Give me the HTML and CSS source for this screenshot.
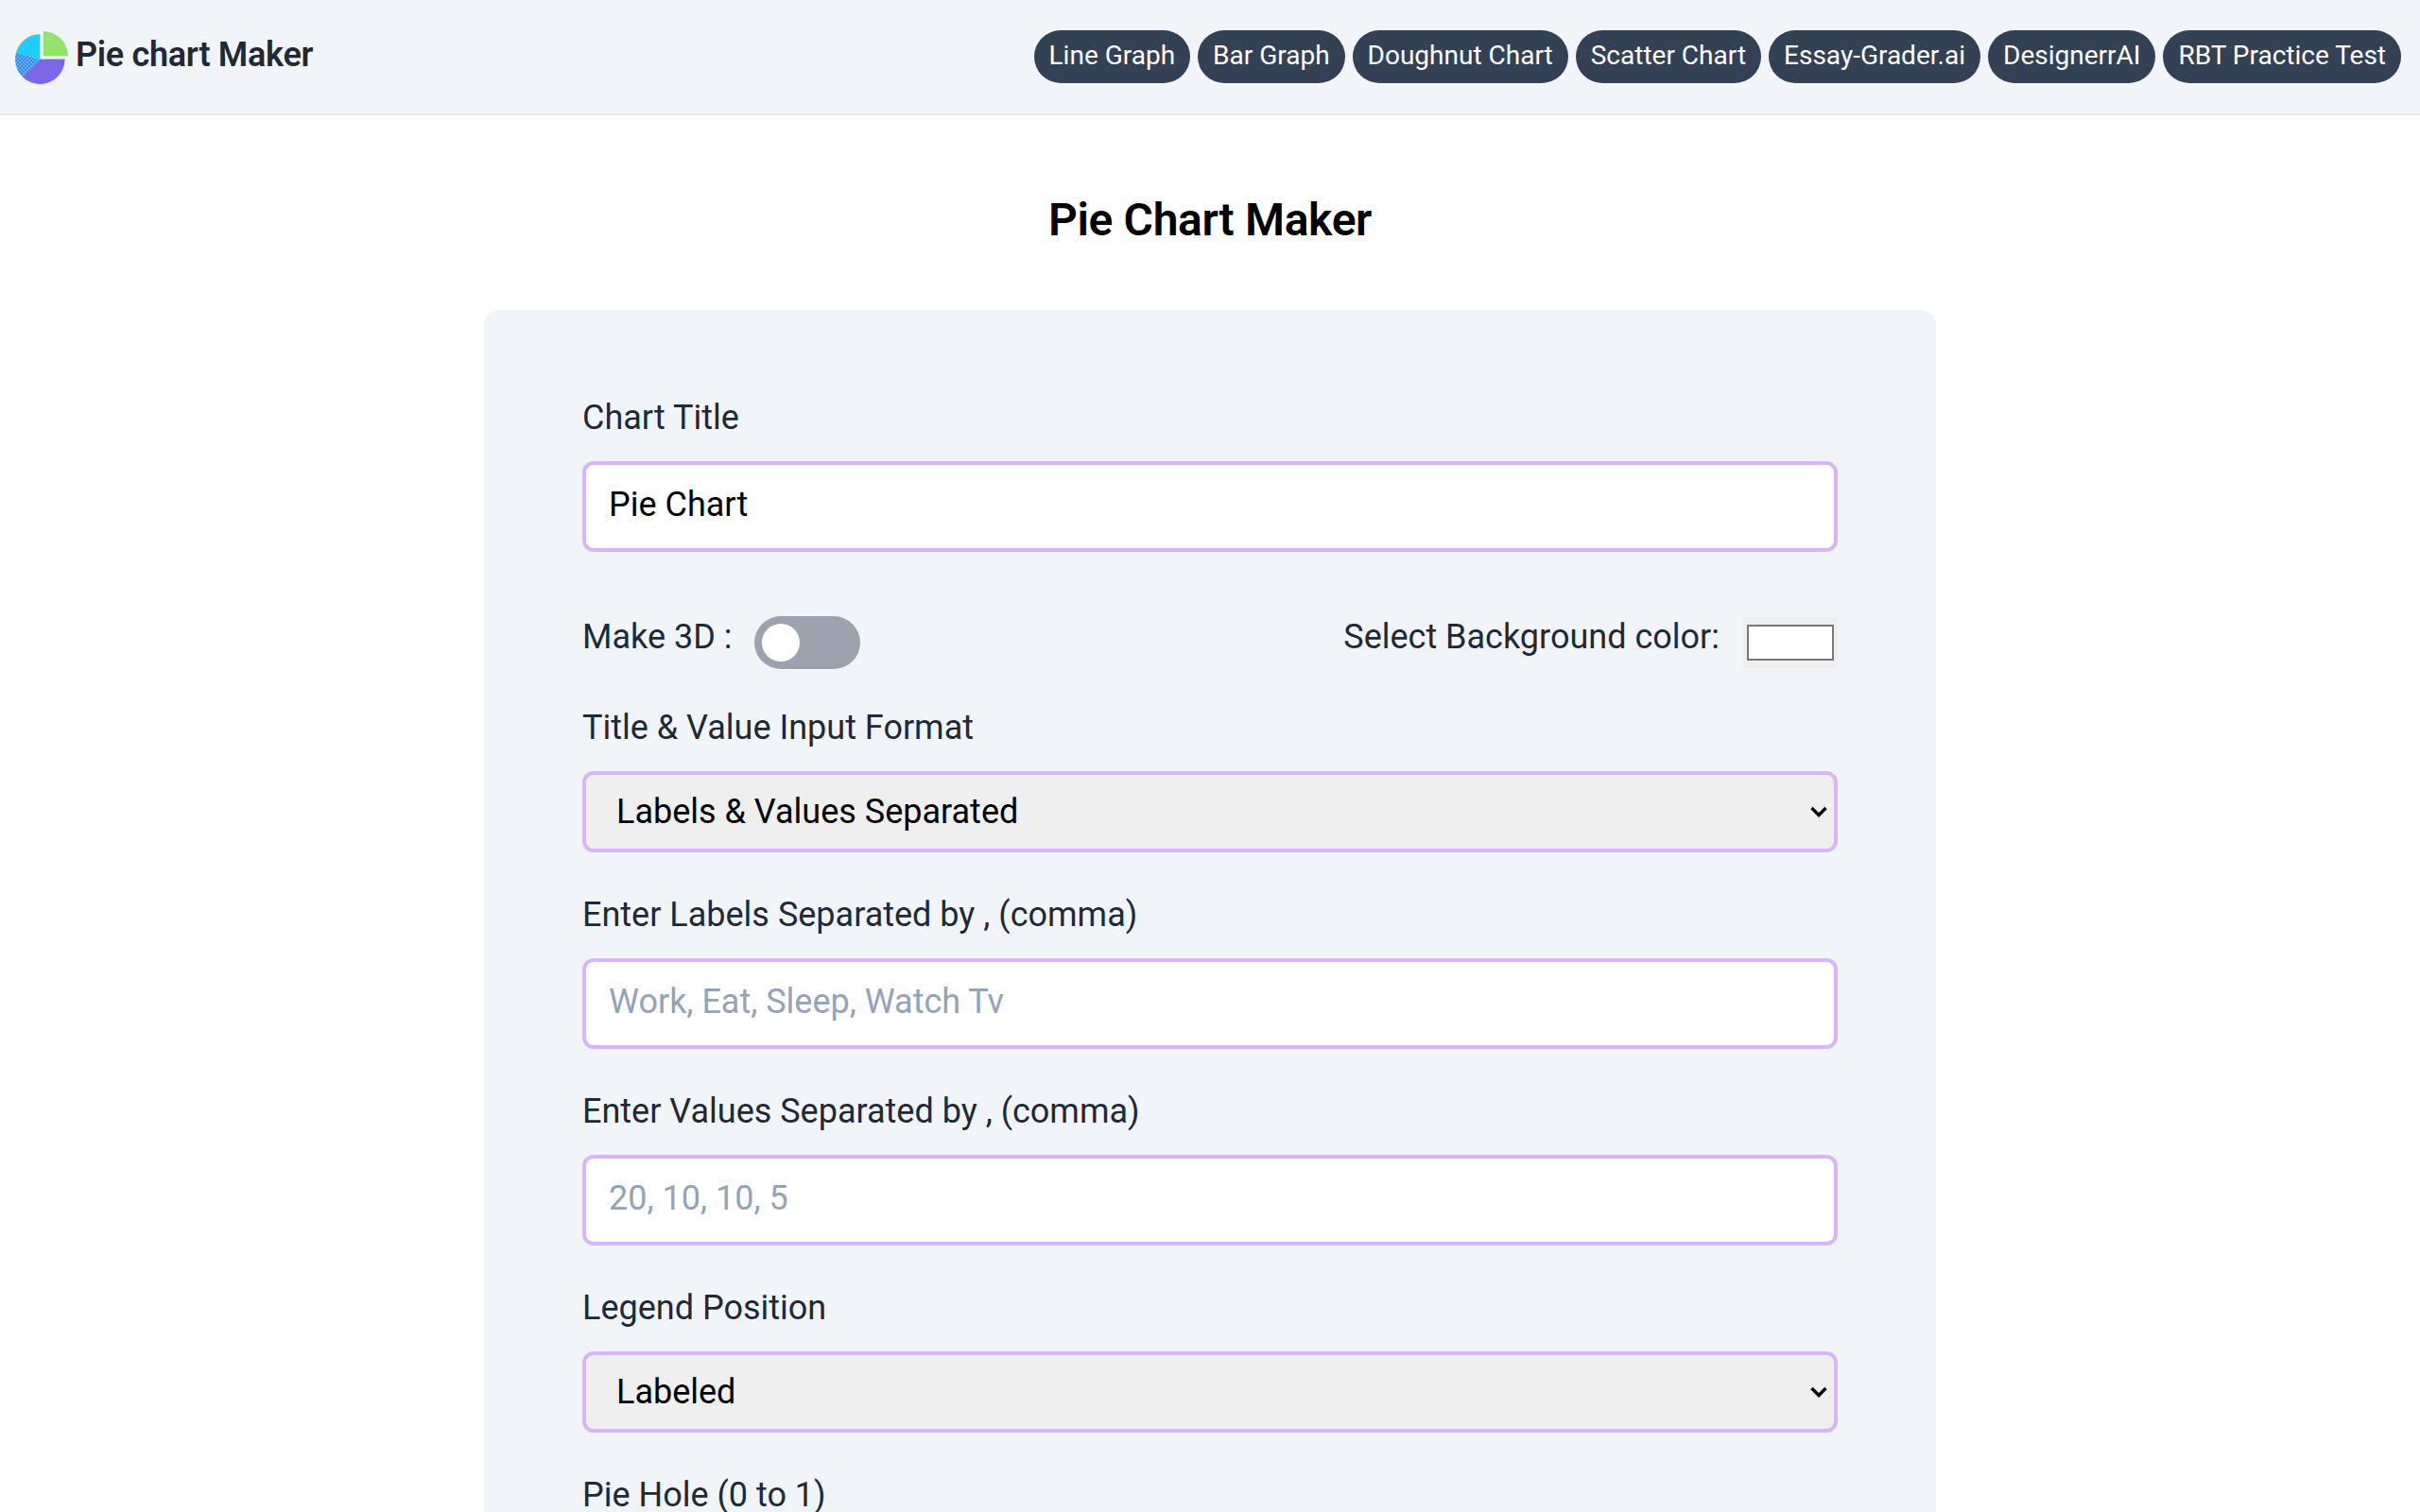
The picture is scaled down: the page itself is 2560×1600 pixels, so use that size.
FILE: index.html
```html
<!DOCTYPE html>
<html lang="en">
<head>
    <meta charset="UTF-8">
    <meta name="viewport" content="width=device-width, initial-scale=1.0">
    <title>Pie Chart Maker</title>
    <link rel="stylesheet" href="styles.css">
</head>
<body>
    <nav class="navbar">
        <a class="brand" href="#">
            <svg class="brand-logo" viewBox="0 0 56 56" aria-hidden="true">
                <defs>
                    <pattern id="dither" width="4" height="4" patternUnits="userSpaceOnUse">
                        <rect width="4" height="4" fill="#7c66ea"></rect>
                        <rect width="2" height="2" fill="#1ccfff"></rect>
                        <rect x="2" y="2" width="2" height="2" fill="#1ccfff"></rect>
                    </pattern>
                </defs>
                <path d="M26.3 29.5V3.2A26.3 26.3 0 0 0 1 22.6Z" fill="#1ccfff"></path>
                <path d="M26.3 29.5L1 22.6A26.3 26.3 0 0 0 7.5 48Z" fill="url(#dither)"></path>
                <path d="M26.3 29.5L7.5 48A26.3 26.3 0 0 0 52.6 29.5Z" fill="#7c66ea"></path>
                <path d="M29.7 26.3V0A26.3 26.3 0 0 1 56 26.3Z" fill="#94e36b"></path>
                <path d="M28 0V28H56" fill="none" stroke="#fff" stroke-width="2"></path>
            </svg>
            <span class="brand-name">Pie chart Maker</span>
        </a>
        <div class="nav-links">
            <a class="nav-pill" href="#">Line Graph</a>
            <a class="nav-pill" href="#">Bar Graph</a>
            <a class="nav-pill" href="#">Doughnut Chart</a>
            <a class="nav-pill" href="#">Scatter Chart</a>
            <a class="nav-pill" href="#">Essay-Grader.ai</a>
            <a class="nav-pill" href="#">DesignerrAI</a>
            <a class="nav-pill" href="#">RBT Practice Test</a>
        </div>
    </nav>

    <h1 class="page-title">Pie Chart Maker</h1>

    <form class="chart-form">
        <label class="field-label" for="chartTitle">Chart Title</label>
        <input class="text-input" id="chartTitle" type="text" value="Pie Chart">

        <div class="options-row">
            <div class="option">
                <span class="option-label">Make 3D :</span>
                <span class="toggle"><span class="toggle-knob"></span></span>
            </div>
            <div class="option">
                <label class="option-label" for="bgColor">Select Background color:</label>
                <input class="color-input" id="bgColor" type="color" value="#ffffff">
            </div>
        </div>

        <label class="field-label" for="inputFormat">Title &amp; Value Input Format</label>
        <select class="select-input" id="inputFormat">
            <option>Labels &amp; Values Separated</option>
        </select>

        <label class="field-label" for="labels">Enter Labels Separated by , (comma)</label>
        <input class="text-input" id="labels" type="text" placeholder="Work, Eat, Sleep, Watch Tv">

        <label class="field-label" for="values">Enter Values Separated by , (comma)</label>
        <input class="text-input" id="values" type="text" placeholder="20, 10, 10, 5">

        <label class="field-label" for="legend">Legend Position</label>
        <select class="select-input" id="legend">
            <option>Labeled</option>
        </select>

        <label class="field-label" for="pieHole">Pie Hole (0 to 1)</label>
    </form>
</body>
</html>
```

FILE: styles.css
```css
html {
    zoom: 2;
    height: 800px;
    overflow: hidden;
}

body {
    margin: 0;
    background: #fff;
    font-family: "Roboto", "Liberation Sans", sans-serif;
    color: #1f2937;
}

a {
    color: inherit;
    text-decoration: none;
}

.navbar {
    display: flex;
    justify-content: space-between;
    align-items: center;
    height: 60px;
    padding: 0 10px 0 8px;
    background: #f1f5f9;
    border-bottom: 1px solid #e5e7eb;
}

.brand {
    display: flex;
    align-items: center;
    gap: 4px;
}

.brand-logo {
    width: 28px;
    height: 28px;
    margin-top: 1px;
}

.brand-name {
    font-size: 18px;
    font-weight: 600;
    line-height: 28px;
    letter-spacing: -0.15px;
    margin-top: -2px;
}

.nav-links {
    display: flex;
    gap: 4px;
}

.nav-pill {
    padding: 3.5px 8px 4.5px;
    border-radius: 14px;
    background: #334155;
    color: #fff;
    font-size: 14px;
    line-height: 20px;
}

.page-title {
    margin: 39.5px 0 31.5px;
    font-size: 24px;
    font-weight: 600;
    line-height: 32px;
    letter-spacing: -0.17px;
    text-align: center;
    color: #000;
}

.chart-form {
    display: flex;
    flex-direction: column;
    width: 664px;
    height: 600px;
    margin: 0 auto;
    padding: 43px 52px 0;
    background: #f1f5f9;
    border-radius: 8px;
}

.field-label {
    font-size: 18px;
    line-height: 28px;
    margin-bottom: 9px;
}

.text-input,
.select-input {
    box-sizing: border-box;
    flex-shrink: 0;
    width: 100%;
    border: 2px solid #d8b4fe;
    border-radius: 6px;
    font-family: inherit;
    font-size: 18px;
    color: #000;
    margin-bottom: 19px;
    outline: none;
}

.text-input {
    height: 48px;
    padding: 0 8px 2px 12px;
    background: #fff;
}

.text-input::placeholder {
    color: #94a3b8;
}

.select-input {
    height: 43px;
    padding: 0 16px;
    appearance: none;
    background-color: #efefef;
    background-image: url("data:image/svg+xml,%3Csvg xmlns='http://www.w3.org/2000/svg' viewBox='0 0 18 12'%3E%3Cpath d='M1.5 2L9 9.5 16.5 2' fill='none' stroke='%23000' stroke-width='3.4'/%3E%3C/svg%3E");
    background-repeat: no-repeat;
    background-position: right 3.5px center;
    background-size: 9px 6px;
}

.options-row {
    display: flex;
    justify-content: space-between;
    align-items: center;
    height: 28px;
    margin-top: 15px;
    margin-bottom: 17px;
}

.option {
    display: flex;
    align-items: center;
}

.option-label {
    font-size: 18px;
    line-height: 28px;
    margin-top: -6px;
}

.toggle {
    display: flex;
    align-items: center;
    width: 56px;
    height: 28px;
    margin-left: 12px;
    padding-left: 4px;
    box-sizing: border-box;
    background: #9ca3af;
    border-radius: 14px;
}

.toggle-knob {
    width: 20px;
    height: 20px;
    background: #fff;
    border-radius: 50%;
}

.color-input {
    width: 50px;
    height: 27px;
    margin-left: 12.5px;
    padding: 0;
    border: 0;
    background: #efefef;
}
```
